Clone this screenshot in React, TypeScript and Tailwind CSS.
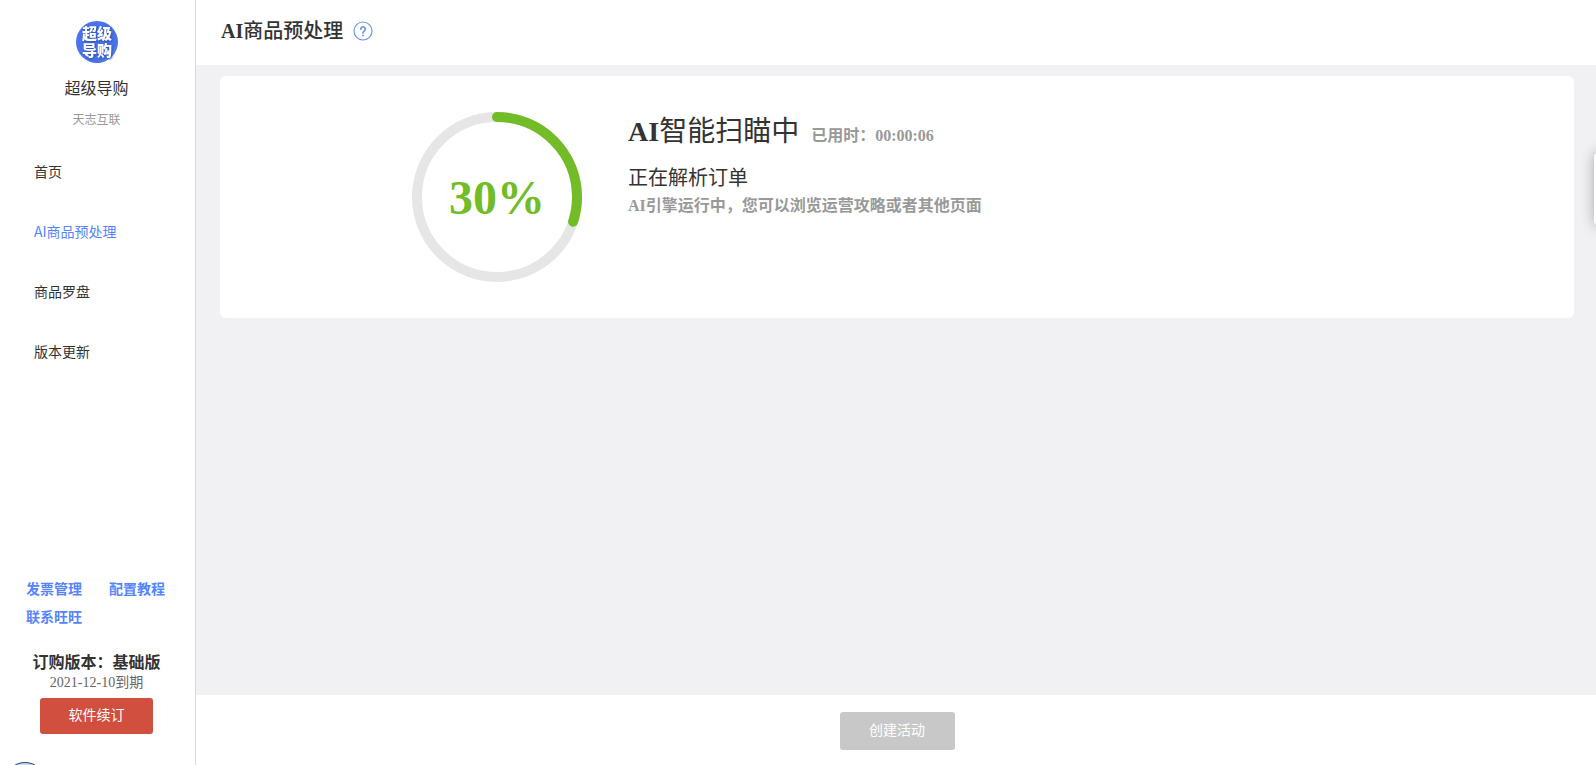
const navItems = [
  { label: "首页", active: false },
  { label: "AI商品预处理", active: true },
  { label: "商品罗盘", active: false },
  { label: "版本更新", active: false },
];

const helpLinks = ["发票管理", "配置教程", "联系旺旺"];

function Logo() {
  return (
    <svg width="42" height="42" viewBox="0 0 42 42" aria-label="超级导购">
      <defs>
        <linearGradient id="logo" x1="0" y1="0" x2="1" y2="1">
          <stop offset="0.75" stopColor="#4a73e8" />
          <stop offset="1" stopColor="#5fa8f0" />
        </linearGradient>
      </defs>
      <circle cx="21" cy="21" r="21" fill="url(#logo)" />
      <g
        fontSize="15"
        fontWeight="900"
        textAnchor="middle"
        fill="#ffffff"
        className="drop-shadow-[1px_1px_1px_#2c4fae]"
      >
        <text x="21" y="18">超级</text>
        <text x="21" y="35">导购</text>
      </g>
    </svg>
  );
}

function Sidebar() {
  return (
    <aside className="relative flex w-49 shrink-0 flex-col overflow-hidden border-r border-[#d9d9dd] bg-white font-['Noto_Sans_CJK_SC',sans-serif]">
      <div className="flex flex-col items-center pt-[21px] pr-0.5">
        <Logo />
        <p className="mt-3 text-base leading-6 text-[#333333]">超级导购</p>
        <p className="mt-2.5 text-xs leading-5 text-[#999999]">天志互联</p>
      </div>

      <nav className="mt-3 flex flex-col">
        {navItems.map((item) => (
          <a
            key={item.label}
            href="#"
            className={
              item.active
                ? "flex h-15 items-center pl-[34px] text-sm text-[#5584ff]"
                : "flex h-15 items-center pl-[34px] text-sm text-[#333333]"
            }
          >
            {item.label}
          </a>
        ))}
      </nav>

      <div className="mt-auto pb-[31px]">
        <div className="flex flex-wrap gap-x-[27px] pl-[26px] text-sm leading-7 font-bold text-[#5584ff]">
          {helpLinks.map((label) => (
            <a key={label} href="#">
              {label}
            </a>
          ))}
        </div>
        <div className="mt-[23px] flex flex-col items-center pr-0.5 font-['Liberation_Serif','Noto_Sans_CJK_SC',serif]">
          <p className="text-base leading-5 font-bold text-[#333333]">
            订购版本：基础版
          </p>
          <p className="text-sm leading-5 text-[#666666]">2021-12-10到期</p>
          <button
            type="button"
            className="mt-[5px] h-9 w-[113px] rounded-[3px] bg-[#d14f3e] text-sm text-white"
          >
            软件续订
          </button>
        </div>
      </div>

      <span className="absolute top-full left-1 -mt-[3px] size-[42px] rounded-full border border-[#1f3f77] bg-[#cbdcee]" />
    </aside>
  );
}

function ProgressRing({ percent }: { percent: number }) {
  return (
    <div className="grid size-[170px] shrink-0 place-items-center">
      <svg
        viewBox="0 0 170 170"
        fill="none"
        strokeWidth="10"
        className="col-start-1 row-start-1 size-full -rotate-90"
      >
        <circle cx="85" cy="85" r="80" stroke="#e6e6e6" />
        <circle
          cx="85"
          cy="85"
          r="80"
          stroke="#71bc27"
          strokeLinecap="round"
          pathLength="100"
          strokeDasharray={`${percent} 100`}
        />
      </svg>
      <span className="col-start-1 row-start-1 pt-0.5 text-5xl font-bold text-[#71bc27]">
        {percent}%
      </span>
    </div>
  );
}

export default function App() {
  return (
    <div className="flex h-screen overflow-hidden bg-[#f1f1f4] font-['Liberation_Serif','Noto_Sans_CJK_SC',serif] text-[#333333]">
      <Sidebar />

      <div className="relative flex min-w-0 flex-1 flex-col overflow-hidden">
        <header className="flex h-[65px] shrink-0 items-center gap-2.5 bg-white pb-1 pl-[25px]">
          <h1 className="text-xl leading-7 font-bold">
            AI<span className="font-medium">商品预处理</span>
          </h1>
          <button type="button" aria-label="帮助">
            <svg
              width="20"
              height="20"
              viewBox="0 0 20 20"
              fill="none"
              stroke="#6b97f0"
              strokeLinecap="round"
            >
              <circle cx="10" cy="10" r="9" strokeWidth="1.2" />
              <path
                d="M7.7 8.2a2.3 2.3 0 1 1 3.7 1.7c-.9.6-1.4 1-1.4 2"
                strokeWidth="1.7"
              />
              <path d="M10 14.3v.1" strokeWidth="1.8" />
            </svg>
          </button>
        </header>

        <main className="min-h-0 flex-1 pt-[11px] pr-[22px] pl-6">
          <section className="flex gap-[46px] rounded-md bg-white py-9 pl-48">
            <ProgressRing percent={30} />
            <div>
              <h2 className="flex items-baseline gap-3">
                <span className="text-[28px] leading-10 font-bold">
                  AI<span className="font-normal">智能扫瞄中</span>
                </span>
                <span className="text-base font-bold text-[#999999]">
                  已用时：00:00:06
                </span>
              </h2>
              <p className="mt-2.5 text-xl leading-8">正在解析订单</p>
              <p className="text-base leading-6 font-bold text-[#999999]">
                AI引擎运行中，您可以浏览运营攻略或者其他页面
              </p>
            </div>
          </section>
        </main>

        <footer className="flex h-[70px] shrink-0 items-center justify-center bg-white pt-0.5 pl-0.5">
          <button
            type="button"
            disabled
            className="h-[38px] w-[115px] rounded-[3px] bg-[#c8c8c8] text-sm text-white"
          >
            创建活动
          </button>
        </footer>

        {/* edge of the collapsed drawer */}
        <div className="absolute top-[153px] left-full -ml-0.5 h-18 w-10 rounded-sm bg-white shadow-[0_0_14px_rgba(0,0,0,0.3)]" />
      </div>
    </div>
  );
}
